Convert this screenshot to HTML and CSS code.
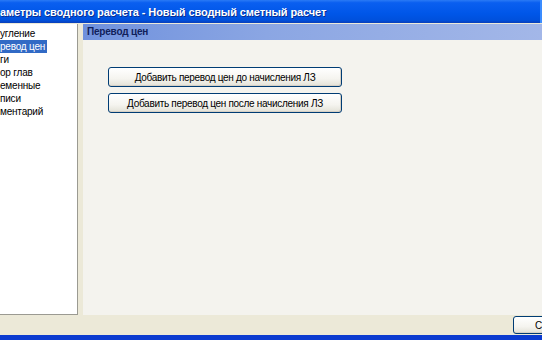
FILE: index.html
```html
<!DOCTYPE html>
<html lang="ru">
<head>
  <meta charset="UTF-8">
  <title>Параметры сводного расчета</title>
  <link rel="stylesheet" href="styles.css">
</head>
<body>
  <div id="window">
    <div id="titlebar">
      <span id="title">аметры сводного расчета - Новый сводный сметный расчет</span>
    </div>
    <div id="main">
      <ul id="nav">
        <li>угление</li>
        <li class="selected">ревод цен</li>
        <li>ги</li>
        <li>ор глав</li>
        <li>еменные</li>
        <li>писи</li>
        <li>ментарий</li>
      </ul>
      <div id="page">
        <div id="page-header">Перевод цен</div>
        <div id="page-content">
          <button class="xp-btn wide">Добавить перевод цен до начисления ЛЗ</button>
          <button class="xp-btn wide">Добавить перевод цен после начисления ЛЗ</button>
        </div>
      </div>
    </div>
    <div id="footer">
      <button class="xp-btn" id="save-btn">Сохранить</button>
    </div>
  </div>
</body>
</html>
```

FILE: styles.css
```css
body {
  margin: 0;
  width: 542px;
  height: 340px;
  overflow: hidden;
  font-family: 'Liberation Sans', Arial, sans-serif;
  font-size: 10px;
  letter-spacing: -0.2px;
  color: #000;
  background-color: #ece9d8;
}
#window {
  display: flex;
  flex-direction: column;
  height: 340px;
  background-color: #ece9d8;
  border-bottom: 5px solid #0b3bd0;
  box-sizing: border-box;
}
#titlebar {
  height: 23px;
  display: flex;
  align-items: center;
  background: linear-gradient(#2a7af5 0%, #0a5ff0 12%, #0056e8 60%, #0050dc 88%, #0a3fb8 100%);
  border-right: 2px solid #3a8cff;
}
#title {
  color: #fff;
  font-family: 'Liberation Sans', Arial, sans-serif;
  font-weight: bold;
  font-size: 11px;
  letter-spacing: -0.1px;
  white-space: nowrap;
  text-shadow: 1px 1px 0 #0a2f90;
  padding-top: 1px;
}
#main {
  flex: 1;
  display: flex;
  gap: 5px;
  padding-top: 1px;
}
#nav {
  list-style: none;
  margin: 0;
  padding: 3px 0 0 0;
  width: 78px;
  height: 291px;
  box-sizing: border-box;
  background-color: #fff;
  border-right: 1px solid #9b9a92;
  border-bottom: 1px solid #9b9a92;
}
#nav li {
  height: 13px;
  line-height: 13px;
  white-space: nowrap;
}
#nav li.selected {
  display: inline-block;
  vertical-align: top;
  background-color: #316ac5;
  color: #fff;
  padding-right: 2px;
}
#page {
  flex: 1;
  height: 291px;
  background-color: #f4f3ee;
  display: flex;
  flex-direction: column;
}
#page-header {
  height: 16px;
  line-height: 16px;
  padding-left: 4px;
  font-weight: bold;
  color: #10205a;
  background: linear-gradient(to right, #6f91dd 0%, #8ba6e3 40%, #a3b7e8 100%);
}
#page-content {
  display: flex;
  flex-direction: column;
  gap: 6px;
  padding: 27px 0 0 25px;
}
.xp-btn {
  font-family: 'Liberation Sans', Arial, sans-serif;
  font-size: 10px;
  letter-spacing: -0.3px;
  color: #000;
  height: 20px;
  padding: 0;
  border: 1px solid #003c74;
  border-radius: 3px;
  background: linear-gradient(#ffffff 0%, #f5f4ef 60%, #e3e1d7 100%);
  box-shadow: inset -1px -1px 0 #d6d0c5;
}
.xp-btn.wide {
  width: 234px;
}
#footer {
  height: 19px;
  display: flex;
  justify-content: flex-end;
  align-items: flex-start;
  padding-top: 1px;
  overflow: hidden;
}
#save-btn {
  width: 75px;
  height: 18px;
  margin-right: -46px;
  text-align: left;
  padding-left: 21px;
}
```
